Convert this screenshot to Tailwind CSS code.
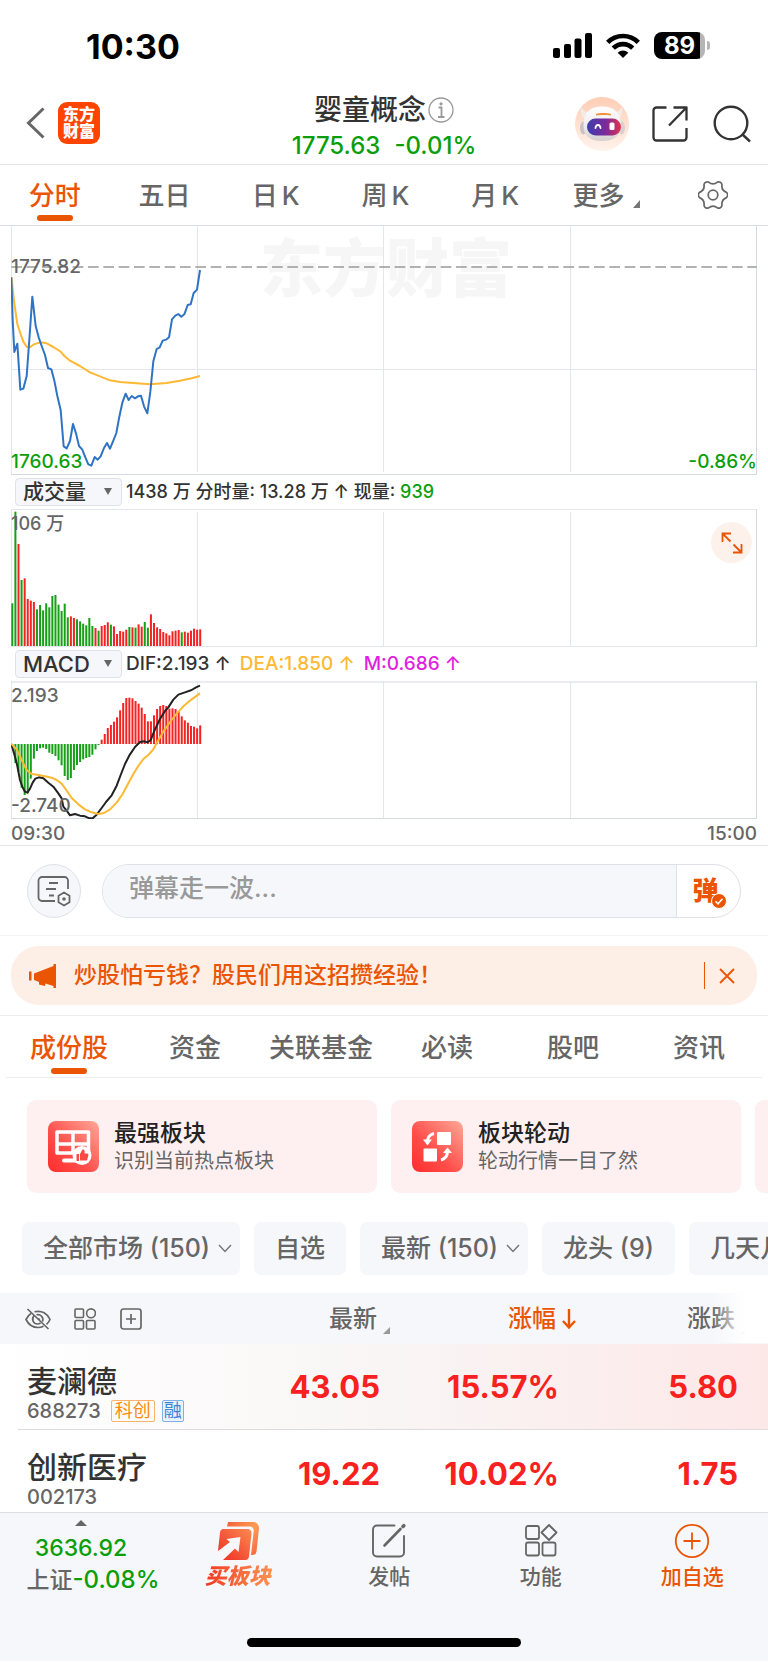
<!DOCTYPE html>
<html lang="zh-CN">
<head>
  <meta charset="UTF-8" />
  <meta name="viewport" content="width=device-width, initial-scale=1.0"/>
  <title>婴童概念</title>
  <script src="https://cdn.jsdelivr.net/npm/@tailwindcss/browser@4"></script>
</head>
<body class="bg-white text-[#333] font-['Inter','Noto_Sans_CJK_SC',sans-serif] font-medium overflow-x-hidden">

  <!-- Status bar -->
  <div class="h-[90px] flex items-center justify-between pl-[86px] pr-[58px] text-black">
    <span class="text-[34px] font-bold leading-9 pt-[3px]">10:30</span>
    <div class="flex items-center gap-[14px]">
      <svg class="w-[39px] h-[25px]" viewBox="0 0 39 25" fill="currentColor" aria-hidden="true">
        <rect x="0" y="15" width="7" height="10" rx="2"/>
        <rect x="11" y="11" width="7" height="14" rx="2"/>
        <rect x="21.500" y="5.500" width="7" height="19.500" rx="2"/>
        <rect x="32" y="0" width="7" height="25" rx="2"/>
      </svg>
      <svg class="w-[34px] h-[25px]" viewBox="0 0 34 25" fill="none" stroke="currentColor" stroke-width="4.600" aria-hidden="true">
        <path d="M1.700 9.300a21.600 21.600 0 0 1 30.600 0"/>
        <path d="M7.300 15.200a13.700 13.700 0 0 1 19.400 0"/>
        <path d="M17 25l-5.300-5.200a7.500 7.500 0 0 1 10.600 0z" fill="currentColor" stroke="none"/>
      </svg>
      <div class="flex items-center gap-[2px]">
        <span class="w-[51px] h-[27px] rounded-[8px] bg-linear-to-r from-black from-90% to-[#b5b5b5] to-90% text-white text-[24px] leading-[27px] font-bold text-center">89</span>
        <span class="w-[3px] h-[9px] rounded-r-full bg-[#b5b5b5]"></span>
      </div>
    </div>
  </div>

  <!-- Title bar -->
  <header class="h-[75px] grid grid-cols-[1fr_auto_1fr] items-center border-b border-[#e6e6e6]">
    <div class="flex items-center gap-[13px] pl-[26px] pb-[8px]">
      <button aria-label="返回">
        <svg class="w-[19px] h-8" viewBox="0 0 19 32" fill="none" stroke="#666" stroke-width="3"><path d="M17.500 1.500 2.500 16l15 14.500"/></svg>
      </button>
      <a href="#" class="w-[42px] h-[42px] rounded-[9px] bg-[#ff4400] text-white text-[16px] leading-[17px] font-black flex items-center justify-center text-center"><span>东方<br>财富</span></a>
    </div>
    <div class="flex flex-col items-center pt-[2px]">
      <div class="flex items-center">
        <h1 class="text-[28px] leading-9 font-medium">婴童概念</h1>
        <button aria-label="说明" class="ml-[2px]">
          <svg class="w-[26px] h-[26px]" viewBox="0 0 26 26" fill="none" stroke="#999" stroke-width="1.300">
            <circle cx="13" cy="13" r="12"/>
            <path d="M10.500 10.500h3v9M10 20h6.500" stroke-width="1.800"/>
            <circle cx="13" cy="6.800" r="1.600" fill="#999" stroke="none"/>
          </svg>
        </button>
      </div>
      <p class="text-[24px] leading-9 text-[#0a9f0a] flex gap-[14px]"><span>1775.63</span><span>-0.01%</span></p>
    </div>
    <div class="flex items-center justify-end pr-[17px] pb-[7px]">
      <button aria-label="智能助手" class="mr-[23px]">
        <svg class="w-[54px] h-[54px]" viewBox="0 0 54 54">
          <defs>
            <linearGradient id="halo" x1="0" y1="0" x2="0" y2="1"><stop offset="0" stop-color="#ffcdb5"/><stop offset="1" stop-color="#fff3ec"/></linearGradient>
            <linearGradient id="visor" x1="0" y1="0" x2="1" y2="0"><stop offset="0" stop-color="#3c3fae"/><stop offset=".55" stop-color="#7b2a9c"/><stop offset="1" stop-color="#e0334f"/></linearGradient>
            <linearGradient id="shell" x1="0" y1="0" x2="0" y2="1"><stop offset="0" stop-color="#fff"/><stop offset=".6" stop-color="#eeeaea"/><stop offset="1" stop-color="#d5cfcf"/></linearGradient>
          </defs>
          <circle cx="27" cy="27" r="27" fill="url(#halo)"/>
          <path d="M6 10c-1 4 0 9 4 12l8-7c-5 1-9 0-12-5zM47 10c1 4 0 9-4 12l-7-7c5 1 8 0 11-5z" fill="#f3ebe8"/>
          <ellipse cx="8.500" cy="31" rx="3.500" ry="6.500" fill="#c9c2c4"/>
          <ellipse cx="46.500" cy="31" rx="3.500" ry="6.500" fill="#d9cfd0"/>
          <path d="M27 9.500c11 0 18.500 5.500 19 17.500.500 11-6 17-19 17S8 38 8.500 27C9 15 16 9.500 27 9.500z" fill="url(#shell)"/>
          <rect x="12" y="21.500" width="34" height="17" rx="8.500" fill="url(#visor)"/>
          <path d="M21 17c3-1.200 11-1.200 15 0v1.500c-4-.700-12-.700-15 0z" fill="#f2913d"/>
          <path d="M20.500 31c.500-4 4.500-4 5 0" fill="none" stroke="#fff" stroke-width="1.800" stroke-linecap="round"/>
          <rect x="34.500" y="25.500" width="5" height="7.500" rx="1.500" fill="#fff"/>
        </svg>
      </button>
      <button aria-label="分享" class="mr-[25px]">
        <svg class="w-9 h-9" viewBox="0 0 36 36" fill="none" stroke="#333" stroke-width="2.300" stroke-linejoin="round">
          <path d="M14.500 1.500h-10a3 3 0 0 0-3 3v27a3 3 0 0 0 3 3h27a3 3 0 0 0 3-3V22M21.500 1.500h13v13M34.500 1.500 17 19.500"/>
        </svg>
      </button>
      <button aria-label="搜索">
        <svg class="w-[38px] h-[38px]" viewBox="0 0 38 38" fill="none" stroke="#333" stroke-width="2.400"><circle cx="18" cy="18" r="16.300"/><path d="m29.500 29.500 7.500 7"/></svg>
      </button>
    </div>
  </header>

  <!-- Period tabs -->
  <nav class="h-[61px] grid grid-cols-7 border-b border-[#dadde6] text-[26px] text-[#666]">
    <button class="relative text-[#ea5504]">分时<span class="absolute left-1/2 -translate-x-1/2 bottom-[4px] w-9 h-[6px] rounded-full bg-[#ea5504]"></span></button>
    <button>五日</button>
    <button class="flex items-center justify-center gap-1 pl-[3px]"><span>日</span><span>K</span></button>
    <button class="flex items-center justify-center gap-1 pl-[3px]"><span>周</span><span>K</span></button>
    <button class="flex items-center justify-center gap-1 pl-[3px]"><span>月</span><span>K</span></button>
    <button class="flex items-center justify-center gap-[9px] pl-[6px]">更多<svg class="w-[7px] h-2 mt-[18px]" viewBox="0 0 7 8" fill="#777" aria-hidden="true"><path d="M7 0v8H0z"/></svg></button>
    <button aria-label="设置" class="flex items-center justify-center">
      <svg class="w-[30px] h-[30px]" viewBox="0 0 30 30" fill="none" stroke="#666" stroke-width="1.700" stroke-linejoin="round">
        <path d="M28.450 12.390A3.400 3.400 0 0 1 28.450 17.610A7.200 7.200 0 0 0 23.990 25.340A3.400 3.400 0 0 1 19.460 27.950A7.200 7.200 0 0 0 10.540 27.950A3.400 3.400 0 0 1 6.010 25.340A7.200 7.200 0 0 0 1.550 17.610A3.400 3.400 0 0 1 1.550 12.390A7.200 7.200 0 0 0 6.010 4.660A3.400 3.400 0 0 1 10.540 2.050A7.200 7.200 0 0 0 19.460 2.050A3.400 3.400 0 0 1 23.990 4.660A7.200 7.200 0 0 0 28.450 12.390z"/>
        <circle cx="15" cy="15" r="4.800"/>
      </svg>
    </button>
  </nav>

  <!-- Charts: 3 svg units are one pixel -->
  <main>
    <section class="mx-[11px] text-[18px] leading-5">
      <div class="relative h-[249px] overflow-hidden">
        <div class="absolute left-[249px] top-0 text-[63px] leading-[84px] font-black text-[#f6f6f6]">东方财富</div>
        <svg class="absolute inset-0 w-full h-full" viewBox="33 18 2238 747" preserveAspectRatio="none" fill="none" stroke-width="3" aria-label="分时走势">
          <path d="M34.500 18v747M592.500 18v738M1150.500 18v738M1711.500 18v738M34 448.500h2236" stroke="#e3e6ee"/>
          <path d="M34 763.500h2236M2269.500 18v747" stroke="#d5d9e2"/>
          <path d="M34 141h2236" stroke="#999" stroke-width="5" stroke-dasharray="32 14"/>
          <polyline stroke="#fdb933" stroke-width="6" stroke-linejoin="round" points="34,172 43,250 52,312 61,340 70,365 80,380 90,382 100,374 120,367 140,370 160,381 182,395 193,408 210,422 240,438 270,457 300,469 330,481 360,486 400,489 450,493 500,489 540,482 575,475 600,468"/>
          <polyline stroke="#2f74c4" stroke-width="6" stroke-linejoin="round" points="34,172 38,300 43,396 52,371 61,509 70,506 80,468 89,345 97,230 107,318 116,352 125,378 135,405 144,444 154,448 163,482 172,528 182,570 191,679 200,685 210,663 219,612 228,640 237,678 247,689 256,712 265,733 274,737 284,711 293,719 302,709 312,684 321,669 330,686 340,662 349,639 358,590 367,548 377,521 386,540 395,528 405,535 414,529 423,527 432,559 442,580 451,515 460,424 470,387 479,382 488,362 498,359 507,352 516,298 526,287 535,282 544,290 553,283 563,255 572,253 581,219 591,209 600,150"/>
        </svg>
        <span class="absolute left-0 top-[31px] text-[19px] text-[#666]">1775.82</span>
        <span class="absolute left-0 bottom-[3px] text-[19px] text-[#0a9f0a]">1760.63</span>
        <span class="absolute right-0 bottom-[3px] text-[19px] text-[#0a9f0a]">-0.86%</span>
      </div>

      <div class="h-[34px] flex items-center gap-1 pl-[4px]">
        <div class="relative">
          <select aria-label="副图指标一" class="appearance-none block w-[107px] h-7 pl-[7px] rounded-[4px] border border-[#dfe2e9] bg-[#f6f7fa] text-[21px] leading-6"><option>成交量</option></select>
          <svg class="absolute right-[10px] top-[10px] w-2 h-[7px] pointer-events-none" viewBox="0 0 8 7" fill="#666"><path d="M0 0h8L4 7z"/></svg>
        </div>
        <p>1438 万 分时量: 13.28 万 ↑ 现量: <span class="text-[#0a9f0a]">939</span></p>
      </div>

      <div class="relative h-[138px]">
        <svg class="absolute inset-0 w-full h-full" viewBox="33 117 2238 414" preserveAspectRatio="none" fill="none" stroke-width="3" aria-label="成交量">
          <path d="M34.500 117v414M592.500 126v402M1150.500 126v402M1711.500 126v402M34 118.500h2236M34 529.500h2236" stroke="#e3e6ee"/>
          <path d="M2269.500 117v414" stroke="#d5d9e2"/>
          <g id="volume"></g>
        </svg>
        <span class="absolute left-0 top-[5px] text-[#666]">106 万</span>
        <button aria-label="全屏" class="absolute right-[5px] top-[13px] w-[41px] h-[41px] rounded-full bg-[#fdf1eb] flex items-center justify-center">
          <svg class="w-[22px] h-[22px]" viewBox="0 0 22 22" fill="none" stroke="#ea5504" stroke-width="1.800"><path d="M1.500 10V1.500H10M1.500 1.500l8 8M20.500 12v8.500H12M20.500 20.500l-8-8"/></svg>
        </button>
      </div>

      <div class="h-[34px] flex items-center gap-1 pl-[4px]">
        <div class="relative">
          <select aria-label="副图指标二" class="appearance-none block w-[107px] h-7 pl-[7px] rounded-[4px] border border-[#dfe2e9] bg-[#f6f7fa] text-[22px] leading-6"><option>MACD</option></select>
          <svg class="absolute right-[10px] top-[10px] w-2 h-[7px] pointer-events-none" viewBox="0 0 8 7" fill="#666"><path d="M0 0h8L4 7z"/></svg>
        </div>
        <p class="flex gap-[9px] text-[19px]"><span>DIF:2.193 ↑</span><span class="text-[#fdb933]">DEA:1.850 ↑</span><span class="text-[#e01fe0]">M:0.686 ↑</span></p>
      </div>

      <div class="relative h-[138px]">
        <svg class="absolute inset-0 w-full h-full" viewBox="33 123 2238 414" preserveAspectRatio="none" fill="none" stroke-width="3" aria-label="MACD">
          <path d="M34.500 123v414M592.500 126v409M1150.500 126v409M1711.500 126v409" stroke="#e3e6ee"/>
          <path d="M34 126h2236M34 535.500h2236M2269.500 123v414" stroke="#d5d9e2"/>
          <g id="macd"></g>
          <polyline stroke="#222" stroke-width="6" stroke-linejoin="round" points="34,312 45,350 52,378 60,420 67,440 75,455 82,458 90,446 98,428 106,416 117,412 130,415 145,428 160,440 175,460 185,475 190,500 200,512 210,526 225,522 240,527 255,529 268,535 278,535 290,524 305,504 318,486 335,466 350,437 362,405 375,372 390,343 405,321 420,306 433,304 443,307 452,300 465,268 480,237 495,213 505,202 520,179 535,164 555,157 575,150 588,142 600,137"/>
          <polyline stroke="#fdb933" stroke-width="6" stroke-linejoin="round" points="34,312 50,328 65,360 80,390 95,402 115,405 135,409 155,413 170,420 185,431 200,452 215,474 235,493 255,508 275,517 295,522 312,519 330,508 350,488 368,462 385,430 400,402 415,378 430,357 445,345 460,328 475,300 490,275 510,246 530,221 550,199 575,178 600,160"/>
        </svg>
        <span class="absolute left-0 top-[5px] text-[19px] text-[#666]">2.193</span>
        <span class="absolute left-0 bottom-[3px] text-[19px] text-[#666]">-2.740</span>
      </div>
    </section>

    <div class="h-[27px] flex items-center justify-between px-[11px] pt-[4px] border-b border-[#e3e5ec] text-[19px] leading-5 text-[#666]">
      <span>09:30</span><span>15:00</span>
    </div>

    <!-- Bullet comments -->
    <form class="h-[90px] flex items-center gap-[21px] px-[27px] border-b border-[#f3f3f5]">
      <button type="button" aria-label="弹幕设置" class="w-[54px] h-[54px] shrink-0 rounded-full border border-[#dfe1e8] bg-[#f6f7fa] flex items-center justify-center">
        <svg class="w-[34px] h-[32px]" viewBox="0 0 34 32" fill="none" stroke="#666" stroke-width="1.800">
          <path d="M18 26H5a3.500 3.500 0 0 1-3.500-3.500v-17A3.500 3.500 0 0 1 5 2h22.500A3.500 3.500 0 0 1 31 5.500V14M12 8h9M9 14h10M12 20.500h5"/>
          <path d="m27 17.500 5.500 3.200v6.600L27 30.500l-5.500-3.200v-6.600z" stroke-linejoin="round"/>
          <circle cx="27" cy="24" r="1.800" fill="#666" stroke="none"/>
        </svg>
      </button>
      <div class="flex-1 h-[54px] flex rounded-full border border-[#dfe1e8] overflow-hidden">
        <input type="text" aria-label="弹幕" placeholder="弹幕走一波..." class="flex-1 min-w-0 bg-[#f6f7fa] pl-[26px] pb-[3px] text-[25px] placeholder:text-[#999] outline-none">
        <button type="button" aria-label="弹幕开关" class="relative w-16 border-l border-[#dfe1e8] pr-[6px] text-[26px] leading-[48px] font-black text-[#ea5504]">弹
          <svg class="absolute left-[34px] top-[28px] w-[16px] h-[16px]" viewBox="0 0 16 16"><circle cx="8" cy="8" r="7.500" fill="#ea5504" stroke="#fff"/><path d="m4.500 8.300 2.500 2.500 4.500-5" fill="none" stroke="#fff" stroke-width="1.600"/></svg>
        </button>
      </div>
    </form>

    <!-- Notice -->
    <div class="pt-[10px] pb-[10px] px-[11px] border-b border-[#ededed]">
      <div class="h-[59px] rounded-[28px] bg-[#fdeee6] flex items-center pl-[18px] pr-[22px] text-[23px] text-[#ea5504]">
        <svg class="w-7 h-6 mr-[17px]" viewBox="0 0 28 24" fill="#ea5504" aria-hidden="true"><path d="M0 7.500h2.500v9H0zM5 9.500 24.500 2V0H27v24h-2.500v-2l-8-2.500-.5 2.500-6-1.500v-2.500L5 16z"/></svg>
        <a href="#" class="flex-1">炒股怕亏钱？股民们用这招攒经验！</a>
        <span class="w-px h-[27px] bg-[#ea5504] mr-[14px]"></span>
        <button aria-label="关闭"><svg class="w-4 h-4" viewBox="0 0 16 16" fill="none" stroke="#ea5504" stroke-width="1.800"><path d="m1 1 14 14M15 1 1 15"/></svg></button>
      </div>
    </div>

    <!-- Content tabs -->
    <nav class="h-[62px] mx-[6px] grid grid-cols-6 border-b border-[#ededed] text-[26px] text-[#666]">
      <button class="relative pt-[2px] text-[#ea5504]">成份股<span class="absolute left-1/2 -translate-x-1/2 bottom-[3px] w-9 h-[6px] rounded-full bg-[#ea5504]"></span></button>
      <button class="pt-[2px]">资金</button>
      <button class="pt-[2px]">关联基金</button>
      <button class="pt-[2px]">必读</button>
      <button class="pt-[2px]">股吧</button>
      <button class="pt-[2px]">资讯</button>
    </nav>

    <!-- Feature cards -->
    <div class="flex gap-[14px] pl-[27px] pt-[22px] overflow-hidden">
      <a href="#" class="w-[350px] h-[93px] shrink-0 rounded-[9px] bg-[#fef0f1] flex items-center gap-[15px] pl-[21px]">
        <svg class="w-[51px] h-[51px]" viewBox="0 0 51 51" aria-hidden="true">
          <defs><linearGradient id="tile" x1="0" y1="1" x2="1" y2="0"><stop offset="0" stop-color="#ff2d2d"/><stop offset=".4" stop-color="#ff4d49"/><stop offset="1" stop-color="#ffa897"/></linearGradient></defs>
          <rect width="51" height="51" rx="8" fill="url(#tile)"/>
          <path d="M9 11h31.500v21H9zM25 11.500v20M9.500 23h31" fill="none" stroke="#fff" stroke-width="3.500" stroke-linejoin="round"/>
          <path d="M16 39.500h12" stroke="#fff" stroke-width="4" stroke-linecap="round"/>
          <circle cx="34" cy="34.500" r="9.500" fill="#fff"/>
          <path d="M28.500 33h2.500v7h-2.500zM32 33l2.500-4.500c2-.5 2.500 1 2 4h3c1 .5 1 1 .8 2l-1.300 5H32z" fill="#fb4a44"/>
        </svg>
        <div>
          <h3 class="text-[23px] leading-7 font-medium text-[#222]">最强板块</h3>
          <p class="text-[20px] leading-7 font-normal text-[#666]">识别当前热点板块</p>
        </div>
      </a>
      <a href="#" class="w-[350px] h-[93px] shrink-0 rounded-[9px] bg-[#fef0f1] flex items-center gap-[15px] pl-[21px]">
        <svg class="w-[51px] h-[51px]" viewBox="0 0 51 51" aria-hidden="true">
          <rect width="51" height="51" rx="8" fill="url(#tile)"/>
          <rect x="25" y="11" width="14" height="13" rx="1" fill="#fff"/><rect x="11.500" y="27.500" width="13.500" height="13" rx="1" fill="#fff"/>
          <path d="M22 12.500c-4 1-6 3-6.500 7M29 39c4-1 6-3 6.500-8" fill="none" stroke="#fff" stroke-width="3"/>
          <path d="M11 18.500h9l-4.500 6zM31 32h9l-4.500-5.500z" fill="#fff"/>
        </svg>
        <div>
          <h3 class="text-[23px] leading-7 font-medium text-[#222]">板块轮动</h3>
          <p class="text-[20px] leading-7 font-normal text-[#666]">轮动行情一目了然</p>
        </div>
      </a>
      <a href="#" aria-label="更多板块工具" class="w-[350px] h-[93px] shrink-0 rounded-[9px] bg-[#fef0f1]"></a>
    </div>

    <!-- Filters -->
    <div class="flex gap-[14px] pl-[22px] pt-[29px] pb-[18px] overflow-hidden whitespace-nowrap text-[25px] text-[#666]">
      <div class="relative shrink-0">
        <select aria-label="市场" class="appearance-none block h-[53px] pl-[21px] pr-[29px] rounded-[7px] bg-[#f6f7fa]"><option>全部市场 (150)</option></select>
        <svg class="absolute right-2 top-[22px] w-[14px] h-[9px] pointer-events-none" viewBox="0 0 14 9" fill="none" stroke="#777" stroke-width="1.500"><path d="m1 1 6 6.500L13 1"/></svg>
      </div>
      <button class="shrink-0 h-[53px] px-[21px] rounded-[7px] bg-[#f6f7fa]">自选</button>
      <div class="relative shrink-0">
        <select aria-label="排序" class="appearance-none block h-[53px] pl-[21px] pr-[29px] rounded-[7px] bg-[#f6f7fa]"><option>最新 (150)</option></select>
        <svg class="absolute right-2 top-[22px] w-[14px] h-[9px] pointer-events-none" viewBox="0 0 14 9" fill="none" stroke="#777" stroke-width="1.500"><path d="m1 1 6 6.500L13 1"/></svg>
      </div>
      <button class="shrink-0 h-[53px] px-[21px] rounded-[7px] bg-[#f6f7fa]">龙头 (9)</button>
      <button class="shrink-0 h-[53px] px-[21px] rounded-[7px] bg-[#f6f7fa]">几天几板</button>
    </div>

    <!-- Stocks -->
    <div class="relative">
      <table class="w-full table-fixed whitespace-nowrap">
        <thead class="bg-[#f6f7fa] text-[24px] text-[#666]">
          <tr class="h-[51px]">
            <th class="pl-[25px] text-left">
              <div class="flex items-center">
                <button aria-label="隐藏" class="mr-[23px]">
                  <svg class="w-[26px] h-[22px]" viewBox="0 0 26 22" fill="none" stroke="#666" stroke-width="1.700">
                    <path d="M6 5.500C3.500 7 2 9.500 1 11.500 3.500 16.500 8 19.500 13 19.500c2 0 4-.5 5.500-1.300M9.500 3.800C17 1.800 22.500 6 25 11.500c-.7 1.700-2 3.500-3.500 4.900M9 7.500c-3 4-.5 8.500 3.500 8.500 1 0 2-.3 3-1M11.500 6.800c4-1 7.500 2.700 6 6.700M12.500 10.500c1 0 2 .8 2 2M2.500 1 23.500 21"/>
                  </svg>
                </button>
                <button aria-label="布局" class="mr-[24px]">
                  <svg class="w-[22px] h-[22px]" viewBox="0 0 22 22" fill="none" stroke="#666" stroke-width="1.600"><rect x="1" y="1" width="8.500" height="8.500" rx="1"/><circle cx="17" cy="5.300" r="4.400"/><rect x="1" y="12.500" width="8.500" height="8.500" rx="1"/><rect x="12.500" y="12.500" width="8.500" height="8.500" rx="1"/></svg>
                </button>
                <button aria-label="添加">
                  <svg class="w-[22px] h-[22px]" viewBox="0 0 22 22" fill="none" stroke="#666" stroke-width="1.700"><rect x="1" y="1" width="20" height="20" rx="2.500"/><path d="M11 6v10M6 11h10"/></svg>
                </button>
              </div>
            </th>
            <th class="w-[179px] pr-[3px] text-right font-medium">
              <button class="relative">最新<svg class="absolute left-full ml-[6px] bottom-[3px] w-[7px] h-[7px]" viewBox="0 0 7 7" fill="#999"><path d="M7 0v7H0z"/></svg></button>
            </th>
            <th class="w-[179px] pr-[3px] text-right font-medium">
              <button class="relative text-[#ea5504]">涨幅<svg class="absolute left-full ml-[6px] top-[8px] w-[14px] h-5" viewBox="0 0 14 20" fill="none" stroke="#ea5504" stroke-width="2.400"><path d="M7 0v18M1 12l6 6.500 6-6.500"/></svg></button>
            </th>
            <th class="w-[209px] pr-[33px] text-right font-medium">
              <button class="relative">涨跌<svg class="absolute left-full ml-[6px] bottom-[3px] w-[7px] h-[7px]" viewBox="0 0 7 7" fill="#999"><path d="M7 0v7H0z"/></svg></button>
            </th>
          </tr>
        </thead>
        <tbody class="text-right text-[31px] leading-9 font-bold text-[#f92020]">
          <tr class="h-[86px] bg-linear-to-r from-white via-[#f9f5f5] to-[#fde8e8]">
            <td class="relative pl-[27px] text-left align-top font-medium after:absolute after:left-[18px] after:right-0 after:bottom-0 after:h-px after:bg-[#dfdcde]">
              <a href="#" class="block pt-[19px] leading-9 text-[30px] text-[#333]">麦澜德</a>
              <div class="flex items-center gap-[7px] text-[20px] leading-6 text-[#666]">
                <span class="mr-[3px]">688273</span>
                <span class="px-[3px] rounded-[2px] border border-[#fbb469] text-[18px] leading-5 font-normal text-[#fb8c0c]">科创</span>
                <span class="px-px rounded-[2px] border border-[#7fb0ea] bg-[#eaf2fc] text-[18px] leading-5 font-normal text-[#3f83d8]">融</span>
              </div>
            </td>
            <td class="relative after:absolute after:inset-x-0 after:bottom-0 after:h-px after:bg-[#dfdcde]">43.05</td>
            <td class="relative after:absolute after:inset-x-0 after:bottom-0 after:h-px after:bg-[#dfdcde]">15.57%</td>
            <td class="relative pr-[30px] after:absolute after:inset-x-0 after:bottom-0 after:h-px after:bg-[#dfdcde]">5.80</td>
          </tr>
          <tr class="h-[82px]">
            <td class="pl-[27px] text-left align-top font-medium">
              <a href="#" class="block pt-[19px] leading-9 text-[30px] text-[#333]">创新医疗</a>
              <div class="text-[20px] leading-6 text-[#666]">002173</div>
            </td>
            <td class="pt-[6px]">19.22</td>
            <td class="pt-[6px]">10.02%</td>
            <td class="pr-[30px] pt-[6px]">1.75</td>
          </tr>
        </tbody>
      </table>
      <div class="absolute right-0 top-0 w-[56px] h-[50px] bg-linear-to-r from-white/0 to-white to-60% pointer-events-none"></div>
    </div>
  </main>

  <!-- Bottom bar -->
  <footer class="border-t border-[#dcdee4] bg-[#f6f7fa]">
    <div class="h-[125px] grid grid-cols-[162px_repeat(4,1fr)] items-start text-[21px] leading-7 text-[#666]">
      <button class="pt-[7px] flex flex-col items-center text-[23px] leading-8 whitespace-nowrap">
        <svg class="w-3 h-[6px] mb-[6px]" viewBox="0 0 12 6" fill="#666"><path d="M6 0l6 6H0z"/></svg>
        <span class="text-[#0a9f0a]">3636.92</span>
        <span class="pl-6">上证<span class="text-[24px] text-[#0a9f0a]">-0.08%</span></span>
      </button>
      <button class="pt-[8px] flex flex-col items-center gap-px">
        <svg class="w-[44px] h-[40px]" viewBox="0 0 44 40" aria-hidden="true">
          <defs>
            <linearGradient id="buy" x1="0" y1="1" x2="1" y2="0"><stop offset="0" stop-color="#ee2b23"/><stop offset="1" stop-color="#fb8a50"/></linearGradient>
            <linearGradient id="buyBack" x1="0" y1="0" x2="1" y2="1"><stop offset="0" stop-color="#f5603a"/><stop offset=".5" stop-color="#fd9c55"/><stop offset="1" stop-color="#f4633f"/></linearGradient>
          </defs>
          <path d="M12 1h25a6 6 0 0 1 6 6.500l-2.500 23a4 4 0 0 1-4 3.500h-1.500l2.700-24a4 4 0 0 0-4-4.500H11z" fill="url(#buyBack)"/>
          <path d="M7.500 8h24a4 4 0 0 1 4 4.500L33 35.500a4 4 0 0 1-4 3.500H7l12-11.500 3.500 3.500 2-15-14 2 3.500 3L2 30l2-18.500A4 4 0 0 1 7.500 8z" fill="url(#buy)"/>
        </svg>
        <span class="px-1 text-[22px] font-black italic bg-linear-to-r from-[#f0281f] to-[#fd9553] bg-clip-text text-transparent">买板块</span>
      </button>
      <button class="pt-[10px] flex flex-col items-center gap-[4px]">
        <svg class="w-9 h-9" viewBox="0 0 36 36" fill="none" stroke="#666" stroke-width="1.900" stroke-linecap="round"><path d="M23.500 2.500H6A4 4 0 0 0 2 6.500v23a4 4 0 0 0 4 4h23a4 4 0 0 0 4-4V13"/><path d="M13.500 22.500 29.500 6" stroke-width="2.600"/><path d="m32 3.500 .8-.8" stroke-width="3.500"/></svg>
        <span>发帖</span>
      </button>
      <button class="pt-[10px] flex flex-col items-center gap-[4px]">
        <svg class="w-9 h-9" viewBox="0 0 36 36" fill="none" stroke="#666" stroke-width="1.800" stroke-linejoin="round"><rect x="3" y="3" width="13" height="13" rx="2"/><rect x="3" y="19.500" width="13" height="13" rx="2"/><rect x="19.500" y="19.500" width="13" height="13" rx="2"/><path d="M26 2l7.500 7.500L26 17l-7.500-7.500z"/></svg>
        <span>功能</span>
      </button>
      <button class="pt-[10px] flex flex-col items-center gap-[4px] text-[#ea5504]">
        <svg class="w-9 h-9" viewBox="0 0 36 36" fill="none" stroke="#ea5504" stroke-width="1.800"><circle cx="18" cy="18" r="16.200"/><path d="M18 9.500v17M9.500 18h17"/></svg>
        <span>加自选</span>
      </button>
    </div>
    <div class="pb-[14px]"><div class="mx-auto w-[274px] h-[9px] rounded-full bg-black"></div></div>
  </footer>

  <script>
    const RED = "#f52222", GREEN = "#16a016";
    const PITCH = 9.24;

    function bar(group, i, y1, y2, color) {
      const r = document.createElementNS("http://www.w3.org/2000/svg", "rect");
      r.setAttribute("x", (34 + i * PITCH).toFixed(1));
      r.setAttribute("y", Math.min(y1, y2));
      r.setAttribute("width", 6);
      r.setAttribute("height", Math.abs(y2 - y1));
      r.setAttribute("fill", color);
      group.appendChild(r);
    }

    // Volume: bar tops, and one letter per bar for its colour
    const volume = [400,125,222,330,325,387,392,396,418,405,421,400,412,378,375,404,423,401,442,439,444,448,454,461,466,444,468,474,482,468,465,457,464,469,492,483,485,479,471,472,473,463,470,456,473,433,459,472,477,486,490,496,484,482,480,487,485,488,482,476,479,478];
    const volumeColors = "ggrgrrrrgggggggggggrrggggggrgrrrgrrrrrgrgrrggrrrrrrrrrrgrrrrrr";
    volume.forEach((top, i) => bar(document.getElementById("volume"), i, top, 528, volumeColors[i] === "r" ? RED : GREEN));

    // MACD: bar ends, measured from the zero line
    const ZERO = 312;
    const macd = [318,369,395,443,465,460,416,356,333,325,323,327,338,342,348,361,376,408,420,414,390,375,366,358,354,351,344,328,315,299,282,264,255,245,232,211,189,174,173,175,183,191,203,222,244,244,226,207,198,195,198,206,205,207,213,229,241,248,258,260,265,256];
    macd.forEach((end, i) => bar(document.getElementById("macd"), i, ZERO, end, end < ZERO ? RED : GREEN));
  </script>
</body>
</html>
